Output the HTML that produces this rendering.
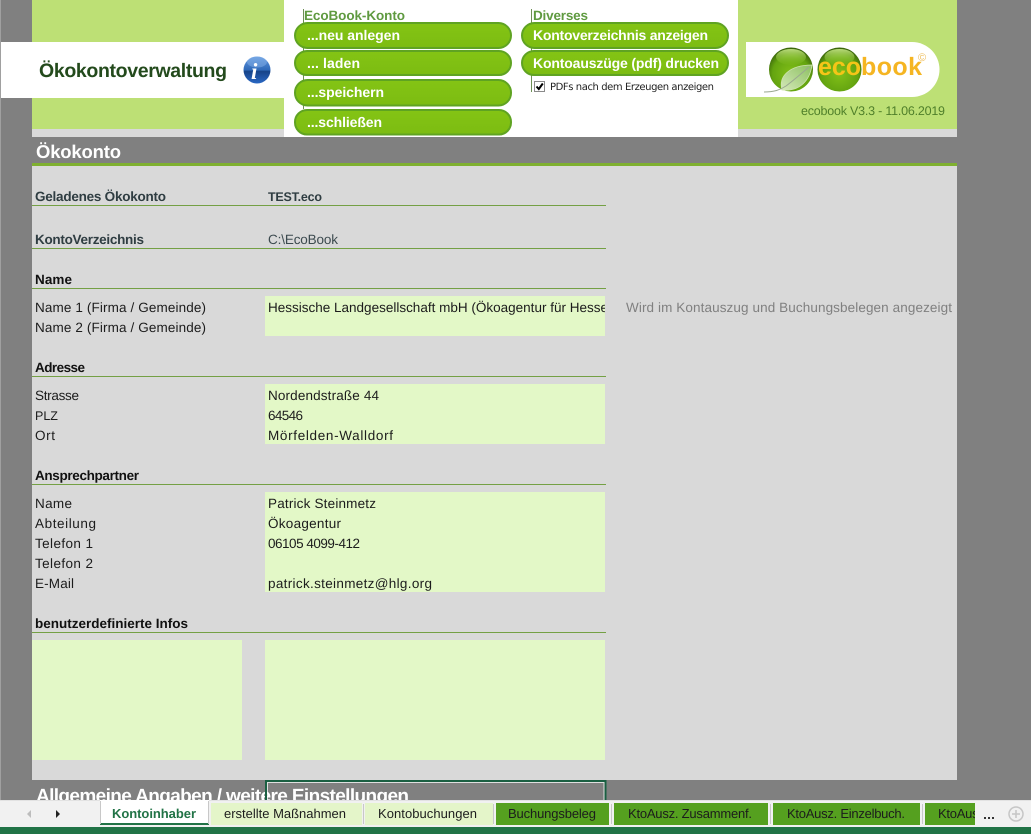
<!DOCTYPE html>
<html><head><meta charset="utf-8"><title>Ökokonto</title>
<style>
html,body{margin:0;padding:0;width:1031px;height:834px;overflow:hidden;background:#808080}
svg{display:block}
text{font-family:"Liberation Sans",sans-serif;font-size:13.5px;fill:#1c1c1c;text-rendering:geometricPrecision}
.b{font-weight:bold}
.lb{fill:#2f3d42;font-weight:bold}
.h{font-weight:bold;fill:#111}
.btn{font-weight:bold;font-size:14px;fill:#fff}
.tab{font-size:13px}
</style></head><body>
<svg width="1031" height="834" viewBox="0 0 1031 834" xmlns="http://www.w3.org/2000/svg">
<defs>
<linearGradient id="tb" x1="0" y1="0" x2="0" y2="1"><stop offset="0" stop-color="#84c414"/><stop offset="1" stop-color="#7cbc12"/></linearGradient>
<radialGradient id="sph" cx=".5" cy=".6" r=".6"><stop offset="0" stop-color="#82c018"/><stop offset=".7" stop-color="#64a410"/><stop offset="1" stop-color="#36600a"/></radialGradient>
<linearGradient id="gl" x1="0" y1="0" x2="0" y2="1"><stop offset="0" stop-color="#c8e88a" stop-opacity=".9"/><stop offset="1" stop-color="#8cc626" stop-opacity=".1"/></linearGradient>
<linearGradient id="inf" x1="0" y1="0" x2="0" y2="1"><stop offset="0" stop-color="#5f97de"/><stop offset=".5" stop-color="#2f69b8"/><stop offset=".55" stop-color="#174488"/><stop offset="1" stop-color="#2a68c4"/></linearGradient>
<linearGradient id="leaf" x1="0" y1="1" x2="1" y2="0"><stop offset="0" stop-color="#d4e8b8"/><stop offset="1" stop-color="#8cc060"/></linearGradient>
<clipPath id="c1"><rect x="265" y="296" width="340" height="40"/></clipPath>
<clipPath id="c2"><rect x="0" y="780" width="1031" height="20"/></clipPath>
<clipPath id="c3"><rect x="924" y="803" width="51" height="22"/></clipPath>
</defs>

<rect width="1031" height="834" fill="#808080"/>
<rect x="0" y="0" width="1" height="800" fill="#a0a0a0"/>
<!-- header -->
<rect x="32" y="0" width="925" height="129" fill="#bde075"/>
<rect x="32" y="129" width="925" height="8" fill="#d9d9d9"/>
<rect x="1" y="42" width="283" height="56" fill="#fff"/>
<rect x="284" y="0" width="454" height="137" fill="#fff"/>
<text x="39" y="77" class="b" style="font-size:19.5px;fill:#234a1c" textLength="188">Ökokontoverwaltung</text>
<circle cx="257" cy="70" r="13.5" fill="url(#inf)"/>
<ellipse cx="257" cy="62" rx="10" ry="5.5" fill="#8db8ec" opacity=".45"/>
<text x="251" y="79" style="font-family:'Liberation Serif',serif;font-style:italic;font-weight:bold;font-size:23px;fill:#fff">i</text>

<rect x="303" y="9" width="1" height="100" fill="#6d8f55"/>
<rect x="531" y="9" width="1" height="83" fill="#6d8f55"/>
<text x="304" y="20" class="b" style="fill:#5f9a40;font-size:13.5px" textLength="101">EcoBook-Konto</text>
<text x="533" y="20" class="b" style="fill:#5f9a40;font-size:13.5px" textLength="55">Diverses</text>

<g fill="url(#tb)" stroke="#5fa322" stroke-width="2">
<rect x="295" y="23" width="216" height="25" rx="12.5"/>
<rect x="295" y="51" width="216" height="24" rx="12"/>
<rect x="295" y="80" width="216" height="25.5" rx="12.5"/>
<rect x="295" y="110" width="216" height="24.5" rx="12"/>
<rect x="522" y="23" width="206" height="25" rx="12.5"/>
<rect x="522" y="51" width="206" height="24" rx="12"/>
</g>
<text x="307" y="40" class="btn" textLength="93">...neu anlegen</text>
<text x="307" y="68" class="btn" textLength="53">... laden</text>
<text x="307" y="97" class="btn" textLength="77">...speichern</text>
<text x="307" y="127" class="btn" textLength="75">...schließen</text>
<text x="533" y="40" class="btn" textLength="175">Kontoverzeichnis anzeigen</text>
<text x="533" y="68" class="btn" textLength="186">Kontoauszüge (pdf) drucken</text>

<rect x="534.5" y="81.5" width="10" height="10" fill="#fff" stroke="#8a8a8a"/>
<path d="M536.5 86.5l2.3 2.5 4-5.5" fill="none" stroke="#000" stroke-width="2"/>
<text x="550" y="90" style="font-family:'DejaVu Sans',sans-serif;font-size:10px;fill:#222" textLength="164">PDFs nach dem Erzeugen anzeigen</text>

<!-- logo -->
<path d="M746 42H912a27.5 27.5 0 0 1 0 55H746Z" fill="#fff"/>
<circle cx="791" cy="69.5" r="22" fill="url(#sph)"/>
<ellipse cx="791" cy="57" rx="15" ry="8" fill="url(#gl)"/>
<circle cx="839.5" cy="69.5" r="22" fill="url(#sph)"/>
<ellipse cx="839.5" cy="57" rx="15" ry="8" fill="url(#gl)"/>
<path d="M782 90C778 76 790 65 812 65 810 80 800 92 782 90Z" fill="url(#leaf)" stroke="#cfe4b0" stroke-width=".8"/>
<path d="M764 92C774 92 780 90 786 86 794 80 802 73 809 67" fill="none" stroke="#9aa890" stroke-width="1"/>
<text x="818" y="75" class="b" style="font-size:25px;fill:#f5c518" textLength="43">eco</text>
<text x="861" y="75" class="b" style="font-size:25px;fill:#f5b522" textLength="61">book</text>
<text x="918" y="61" style="font-size:11px;fill:#eebb55">©</text>
<text x="801" y="115" style="font-size:12.5px;fill:#4f7f2a" textLength="144">ecobook V3.3 - 11.06.2019</text>

<!-- title band -->
<rect x="32" y="163" width="925" height="3" fill="#7fb030"/>
<rect x="32" y="166" width="925" height="614" fill="#d9d9d9"/>
<text x="36" y="158" class="b" style="font-size:18.5px;fill:#fff" textLength="85">Ökokonto</text>

<!-- input cells -->
<g fill="#e3f8c7">
<rect x="265" y="296" width="340" height="40"/>
<rect x="265" y="384" width="340" height="60"/>
<rect x="265" y="492" width="340" height="100"/>
<rect x="32" y="640" width="210" height="120"/>
<rect x="265" y="640" width="340" height="120"/>
</g>
<!-- lines -->
<g fill="#74a044">
<rect x="32" y="205" width="574" height="1"/>
<rect x="32" y="248" width="574" height="1"/>
<rect x="32" y="288" width="574" height="1"/>
<rect x="32" y="376" width="574" height="1"/>
<rect x="32" y="484" width="574" height="1"/>
<rect x="32" y="632" width="574" height="1"/>
</g>

<text x="35" y="201" class="lb" textLength="131">Geladenes Ökokonto</text>
<text x="268" y="201" class="lb" style="font-size:12.5px" textLength="54">TEST.eco</text>
<text x="35" y="244" class="lb" textLength="109">KontoVerzeichnis</text>
<text x="268" y="244" style="fill:#3c4a4f" textLength="70">C:\EcoBook</text>
<text x="35" y="284" class="h" textLength="37">Name</text>
<text x="35" y="312" textLength="171">Name 1 (Firma / Gemeinde)</text>
<text x="35" y="332" textLength="171">Name 2 (Firma / Gemeinde)</text>
<g clip-path="url(#c1)"><text x="268" y="312" textLength="352">Hessische Landgesellschaft mbH (Ökoagentur für Hessen)</text></g>
<text x="626" y="312" style="fill:#808080" textLength="326">Wird im Kontauszug und Buchungsbelegen angezeigt</text>

<text x="35" y="372" class="h" textLength="50">Adresse</text>
<text x="35" y="400" textLength="44">Strasse</text>
<text x="35" y="420" style="font-size:12.5px">PLZ</text>
<text x="35" y="440" textLength="20">Ort</text>
<text x="268" y="400" textLength="111">Nordendstraße 44</text>
<text x="268" y="420" textLength="35">64546</text>
<text x="268" y="440" textLength="125">Mörfelden-Walldorf</text>

<text x="35" y="480" class="h" textLength="104">Ansprechpartner</text>
<text x="35" y="508" textLength="37">Name</text>
<text x="35" y="528" textLength="61">Abteilung</text>
<text x="35" y="548" textLength="58">Telefon 1</text>
<text x="35" y="568" textLength="58">Telefon 2</text>
<text x="35" y="588" textLength="39">E-Mail</text>
<text x="268" y="508" textLength="108">Patrick Steinmetz</text>
<text x="268" y="528" textLength="73">Ökoagentur</text>
<text x="268" y="548" textLength="92">06105 4099-412</text>
<text x="268" y="588" textLength="164">patrick.steinmetz@hlg.org</text>
<text x="35" y="628" class="h" textLength="153">benutzerdefinierte Infos</text>

<!-- clipped section head -->
<g clip-path="url(#c2)"><text x="36" y="802" class="b" style="font-size:19px;fill:#fff" textLength="373">Allgemeine Angaben / weitere Einstellungen</text></g>
<path d="M266 800V781H605.5V800" fill="none" stroke="#1a5f42" stroke-width="2"/>
<path d="M267.5 800V782.5H604V800" fill="none" stroke="#fff" stroke-width="1" opacity=".75"/>

<!-- tab bar -->
<rect x="0" y="800" width="1031" height="27" fill="#f1f1f1"/>
<rect x="0" y="800" width="1031" height="1" fill="#e2e2e2"/>
<rect x="0" y="827" width="1031" height="7" fill="#217346"/>
<path d="M31 810v8l-4-4Z" fill="#bdbdbd"/>
<path d="M56 810v8l4-4Z" fill="#222"/>

<rect x="100" y="800" width="109" height="24" fill="#fff"/>
<rect x="100" y="823" width="109" height="2" fill="#217346"/>
<rect x="100" y="801" width="1" height="23" fill="#c8c8c8"/>
<rect x="208" y="801" width="1" height="23" fill="#c8c8c8"/>
<text x="112" y="818" class="tab b" style="fill:#217346" textLength="84">Kontoinhaber</text>

<rect x="211" y="803" width="151" height="22" fill="#e4f5c9"/>
<text x="224" y="818" class="tab" textLength="122">erstellte Maßnahmen</text>
<rect x="363" y="804" width="1" height="20" fill="#c8c8c8"/>
<rect x="365" y="803" width="128" height="22" fill="#e4f5c9"/>
<text x="378" y="818" class="tab" textLength="99">Kontobuchungen</text>
<rect x="493" y="804" width="1" height="20" fill="#c8c8c8"/>
<rect x="496" y="803" width="113" height="22" fill="#55a01f"/>
<text x="508" y="818" class="tab" textLength="88">Buchungsbeleg</text>
<rect x="611" y="804" width="1" height="20" fill="#c8c8c8"/>
<rect x="614" y="803" width="154" height="22" fill="#55a01f"/>
<text x="628" y="818" class="tab" textLength="124">KtoAusz. Zusammenf.</text>
<rect x="770" y="804" width="1" height="20" fill="#c8c8c8"/>
<rect x="773" y="803" width="147" height="22" fill="#55a01f"/>
<text x="787" y="818" class="tab" textLength="118">KtoAusz. Einzelbuch.</text>
<rect x="922" y="804" width="1" height="20" fill="#c8c8c8"/>
<rect x="925" y="803" width="50" height="22" fill="#55a01f"/>
<g clip-path="url(#c3)"><text x="938" y="818" class="tab" textLength="118">KtoAusz. Einzelbuch.</text></g>
<g fill="#333"><rect x="984" y="817" width="2" height="2"/><rect x="988" y="817" width="2" height="2"/><rect x="992" y="817" width="2" height="2"/></g>
<circle cx="1016" cy="814" r="7" fill="none" stroke="#c6c6c6" stroke-width="1.5"/>
<path d="M1012 814h8M1016 810v8" stroke="#c6c6c6" stroke-width="1.5"/>
</svg>
</body></html>
